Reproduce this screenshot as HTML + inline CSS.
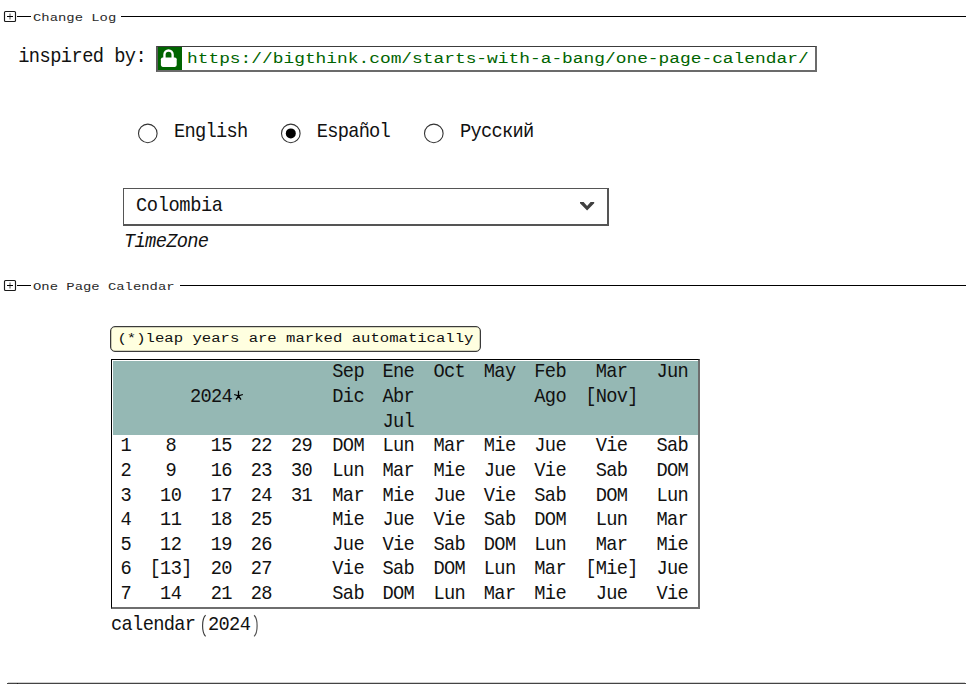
<!DOCTYPE html>
<html><head><meta charset="utf-8">
<style>
html,body{margin:0;padding:0;background:#fff;}
body{width:972px;height:693px;position:relative;overflow:hidden;font-family:"Liberation Mono",monospace;color:#111;}
.a{position:absolute;white-space:pre;line-height:0;}
.c{position:absolute;width:80px;text-align:center;font-size:18.7px;letter-spacing:-0.67px;line-height:0;white-space:pre;transform:scaleY(1.06);transform-origin:50% 5px;}
.hline{position:absolute;height:1px;background:#000;}
.abs{position:absolute;}
</style></head><body>
<svg class="abs" style="left:0px;top:0px" width="20" height="25"><rect x="4.5" y="11.5" width="11" height="10" rx="1" fill="none" stroke="#1a1a1a" stroke-width="1.15"/>
<path d="M10 13.5V19.5" stroke="#777" stroke-width="1.3"/><path d="M7 16.5H13" stroke="#000" stroke-width="1"/></svg>
<div class="hline" style="left:17px;top:16px;width:14px"></div>
<div class="a" style="left:33px;top:17.00px;font-size:13.89px;transform:scaleY(0.82);transform-origin:0 4.0px;color:#2a2a2a">Change Log</div>
<div class="hline" style="left:121px;top:16px;width:845px"></div>

<div class="a" style="left:18.2px;top:57.00px;font-size:18.7px;letter-spacing:-0.55px;transform:scaleY(1.06);transform-origin:0 5.0px;">inspired by:</div>
<div class="abs" style="left:156px;top:46px;width:657px;height:23px;border-top:1px solid #3c3c3c;border-left:2px solid #5a5a5a;border-right:2px solid #6b6b6b;border-bottom:2px solid #6b6b6b;background:#fff"></div>
<div class="abs" style="left:158px;top:47px;width:24px;height:23px;background:#006400"></div>
<svg class="abs" style="left:158px;top:47px" width="24" height="23" viewBox="0 0 24 23">
<path d="M6.45 11V7.55a4.1 4.1 0 0 1 8.2 0V11" fill="none" stroke="#fff" stroke-width="2.35"/>
<rect x="2.9" y="10.5" width="15.8" height="9.4" rx="1.8" fill="#fff"/>
</svg>
<div class="a" style="left:187px;top:58.00px;font-size:17.87px;transform:scaleY(0.82);transform-origin:0 5.0px;color:#006400">https://bigthink.com/starts-with-a-bang/one-page-calendar/</div>

<svg class="abs" style="left:137px;top:123px" width="22" height="22"><circle cx="10.8" cy="10.4" r="9.3" fill="#fff" stroke="#333" stroke-width="1.1"/></svg>
<svg class="abs" style="left:280px;top:123px" width="22" height="22"><circle cx="10.8" cy="10.4" r="9.3" fill="#fff" stroke="#333" stroke-width="1.1"/><circle cx="10.8" cy="10.4" r="5" fill="#000"/></svg>
<svg class="abs" style="left:423px;top:123px" width="22" height="22"><circle cx="10.8" cy="10.4" r="9.3" fill="#fff" stroke="#333" stroke-width="1.1"/></svg>
<div class="a" style="left:174px;top:132.00px;font-size:18.7px;letter-spacing:-0.72px;transform:scaleY(1.06);transform-origin:0 5.0px;">English</div>
<div class="a" style="left:316.8px;top:132.00px;font-size:18.7px;letter-spacing:-0.75px;transform:scaleY(1.06);transform-origin:0 5.0px;">Español</div>
<div class="a" style="left:460px;top:132.00px;font-size:18.7px;letter-spacing:-0.72px;transform:scaleY(1.06);transform-origin:0 5.0px;">Русский</div>

<div class="abs" style="left:123px;top:188px;width:483px;height:35px;border-top:1px solid #555;border-left:1px solid #555;border-right:2px solid #555;border-bottom:2px solid #555;background:#fff"></div>
<div class="a" style="left:136.05px;top:206.00px;font-size:18.7px;letter-spacing:-0.39px;transform:scaleY(1.06);transform-origin:0 5.0px;">Colombia</div>
<svg class="abs" style="left:570px;top:195px" width="30" height="20" viewBox="570 195 30 20"><path d="M580 202.1L583.6 202.1L587.1 206.1L590.6 202.1L594.2 202.1L594.2 203.3L587.1 210.5L580 203.3Z" fill="#404040"/></svg>
<div class="a" style="left:124px;top:242.00px;font-size:18.7px;letter-spacing:-0.67px;transform:scaleY(1.06);transform-origin:0 5.0px;font-style:italic">TimeZone</div>

<svg class="abs" style="left:0px;top:269px" width="20" height="25"><rect x="4.5" y="11.5" width="11" height="10" rx="1" fill="none" stroke="#1a1a1a" stroke-width="1.15"/>
<path d="M10 13.5V19.5" stroke="#777" stroke-width="1.3"/><path d="M7 16.5H13" stroke="#000" stroke-width="1"/></svg>
<div class="hline" style="left:17px;top:285px;width:14px"></div>
<div class="a" style="left:33px;top:286.00px;font-size:13.89px;transform:scaleY(0.82);transform-origin:0 4.0px;color:#2a2a2a">One Page Calendar</div>
<div class="hline" style="left:180px;top:285px;width:786px"></div>

<div class="abs" style="left:110px;top:326px;width:369px;height:24px;border:1px solid #3a3a3a;box-shadow:inset 0 0 0 0.6px rgba(0,0,0,0.35);border-radius:5px;background:#ffffe0"></div>
<div class="a" style="left:117.5px;top:338.40px;font-size:15.625px;transform:scaleY(0.82);transform-origin:0 4.0px;">(*)leap years are marked automatically</div>

<div class="abs" style="left:111px;top:359px;width:585px;height:246px;border-top:1px solid #000;border-left:1px solid #000;border-right:2px solid #6e6e6e;border-bottom:2px solid #6e6e6e;padding:1px 0 0 1px;background:#fff">
  <div style="width:585px;height:74px;background:#95b8b4"></div>
</div>
<div class="c" style="left:308.17px;top:372.00px">Sep</div>
<div class="c" style="left:308.17px;top:397.00px">Dic</div>
<div class="c" style="left:358.37px;top:372.00px">Ene</div>
<div class="c" style="left:358.37px;top:397.00px">Abr</div>
<div class="c" style="left:358.37px;top:422.00px">Jul</div>
<div class="c" style="left:409.37px;top:372.00px">Oct</div>
<div class="c" style="left:459.67px;top:372.00px">May</div>
<div class="c" style="left:510.17px;top:372.00px">Feb</div>
<div class="c" style="left:510.17px;top:397.00px">Ago</div>
<div class="c" style="left:571.51px;top:372.00px">Mar</div>
<div class="c" style="left:571.51px;top:397.00px">[Nov]</div>
<div class="c" style="left:632.26px;top:372.00px">Jun</div>
<div class="c" style="left:176.26px;top:397.00px">2024<span style='color:transparent'>*</span></div>
<svg class="abs" style="left:228px;top:386px" width="20" height="18" viewBox="228 386 20 18"><path d="M238.5 390.8V396.2M234.2 394.5L238.5 395.9L242.9 394.5M236 399.7L238.5 395.9L241 399.7" fill="none" stroke="#000" stroke-width="1.3"/></svg>
<div class="c" style="left:85.77px;top:446.00px">1</div>
<div class="c" style="left:130.66px;top:446.00px">8</div>
<div class="c" style="left:181.31px;top:446.00px">15</div>
<div class="c" style="left:221.31px;top:446.00px">22</div>
<div class="c" style="left:261.47px;top:446.00px">29</div>
<div class="c" style="left:308.17px;top:446.00px">DOM</div>
<div class="c" style="left:358.37px;top:446.00px">Lun</div>
<div class="c" style="left:409.37px;top:446.00px">Mar</div>
<div class="c" style="left:459.67px;top:446.00px">Mie</div>
<div class="c" style="left:510.17px;top:446.00px">Jue</div>
<div class="c" style="left:571.51px;top:446.00px">Vie</div>
<div class="c" style="left:632.26px;top:446.00px">Sab</div>
<div class="c" style="left:85.77px;top:471.00px">2</div>
<div class="c" style="left:130.66px;top:471.00px">9</div>
<div class="c" style="left:181.31px;top:471.00px">16</div>
<div class="c" style="left:221.31px;top:471.00px">23</div>
<div class="c" style="left:261.47px;top:471.00px">30</div>
<div class="c" style="left:308.17px;top:471.00px">Lun</div>
<div class="c" style="left:358.37px;top:471.00px">Mar</div>
<div class="c" style="left:409.37px;top:471.00px">Mie</div>
<div class="c" style="left:459.67px;top:471.00px">Jue</div>
<div class="c" style="left:510.17px;top:471.00px">Vie</div>
<div class="c" style="left:571.51px;top:471.00px">Sab</div>
<div class="c" style="left:632.26px;top:471.00px">DOM</div>
<div class="c" style="left:85.77px;top:496.00px">3</div>
<div class="c" style="left:130.66px;top:496.00px">10</div>
<div class="c" style="left:181.31px;top:496.00px">17</div>
<div class="c" style="left:221.31px;top:496.00px">24</div>
<div class="c" style="left:261.47px;top:496.00px">31</div>
<div class="c" style="left:308.17px;top:496.00px">Mar</div>
<div class="c" style="left:358.37px;top:496.00px">Mie</div>
<div class="c" style="left:409.37px;top:496.00px">Jue</div>
<div class="c" style="left:459.67px;top:496.00px">Vie</div>
<div class="c" style="left:510.17px;top:496.00px">Sab</div>
<div class="c" style="left:571.51px;top:496.00px">DOM</div>
<div class="c" style="left:632.26px;top:496.00px">Lun</div>
<div class="c" style="left:85.77px;top:520.00px">4</div>
<div class="c" style="left:130.66px;top:520.00px">11</div>
<div class="c" style="left:181.31px;top:520.00px">18</div>
<div class="c" style="left:221.31px;top:520.00px">25</div>
<div class="c" style="left:308.17px;top:520.00px">Mie</div>
<div class="c" style="left:358.37px;top:520.00px">Jue</div>
<div class="c" style="left:409.37px;top:520.00px">Vie</div>
<div class="c" style="left:459.67px;top:520.00px">Sab</div>
<div class="c" style="left:510.17px;top:520.00px">DOM</div>
<div class="c" style="left:571.51px;top:520.00px">Lun</div>
<div class="c" style="left:632.26px;top:520.00px">Mar</div>
<div class="c" style="left:85.77px;top:545.00px">5</div>
<div class="c" style="left:130.66px;top:545.00px">12</div>
<div class="c" style="left:181.31px;top:545.00px">19</div>
<div class="c" style="left:221.31px;top:545.00px">26</div>
<div class="c" style="left:308.17px;top:545.00px">Jue</div>
<div class="c" style="left:358.37px;top:545.00px">Vie</div>
<div class="c" style="left:409.37px;top:545.00px">Sab</div>
<div class="c" style="left:459.67px;top:545.00px">DOM</div>
<div class="c" style="left:510.17px;top:545.00px">Lun</div>
<div class="c" style="left:571.51px;top:545.00px">Mar</div>
<div class="c" style="left:632.26px;top:545.00px">Mie</div>
<div class="c" style="left:85.77px;top:569.00px">6</div>
<div class="c" style="left:130.66px;top:569.00px">[13]</div>
<div class="c" style="left:181.31px;top:569.00px">20</div>
<div class="c" style="left:221.31px;top:569.00px">27</div>
<div class="c" style="left:308.17px;top:569.00px">Vie</div>
<div class="c" style="left:358.37px;top:569.00px">Sab</div>
<div class="c" style="left:409.37px;top:569.00px">DOM</div>
<div class="c" style="left:459.67px;top:569.00px">Lun</div>
<div class="c" style="left:510.17px;top:569.00px">Mar</div>
<div class="c" style="left:571.51px;top:569.00px">[Mie]</div>
<div class="c" style="left:632.26px;top:569.00px">Jue</div>
<div class="c" style="left:85.77px;top:594.00px">7</div>
<div class="c" style="left:130.66px;top:594.00px">14</div>
<div class="c" style="left:181.31px;top:594.00px">21</div>
<div class="c" style="left:221.31px;top:594.00px">28</div>
<div class="c" style="left:308.17px;top:594.00px">Sab</div>
<div class="c" style="left:358.37px;top:594.00px">DOM</div>
<div class="c" style="left:409.37px;top:594.00px">Lun</div>
<div class="c" style="left:459.67px;top:594.00px">Mar</div>
<div class="c" style="left:510.17px;top:594.00px">Mie</div>
<div class="c" style="left:571.51px;top:594.00px">Jue</div>
<div class="c" style="left:632.26px;top:594.00px">Vie</div>

<div class="a" style="left:111px;top:625.00px;font-size:18.7px;letter-spacing:-0.67px;transform:scaleY(1.06);transform-origin:0 5.0px;">calendar</div>
<svg class="abs" style="left:190px;top:605px" width="80" height="40" viewBox="190 605 80 40"><path d="M205.6 615.2C201.6 619 201.6 632.6 205.6 636.4" fill="none" stroke="#333" stroke-width="1.1"/><path d="M254.1 615.2C258.1 619 258.1 632.6 254.1 636.4" fill="none" stroke="#555" stroke-width="1.2"/></svg>
<div class="a" style="left:208px;top:625.00px;font-size:18.7px;letter-spacing:-0.67px;transform:scaleY(1.06);transform-origin:0 5.0px;">2024</div>


<div class="abs" style="left:8px;top:682px;width:957px;height:1px;background:#d0d0d0"></div>
<div class="abs" style="left:7px;top:683px;width:959px;height:1px;background:#444"></div>
<div class="abs" style="left:17px;top:683px;width:1px;height:1px;background:#1a1a1a"></div>
</body></html>
